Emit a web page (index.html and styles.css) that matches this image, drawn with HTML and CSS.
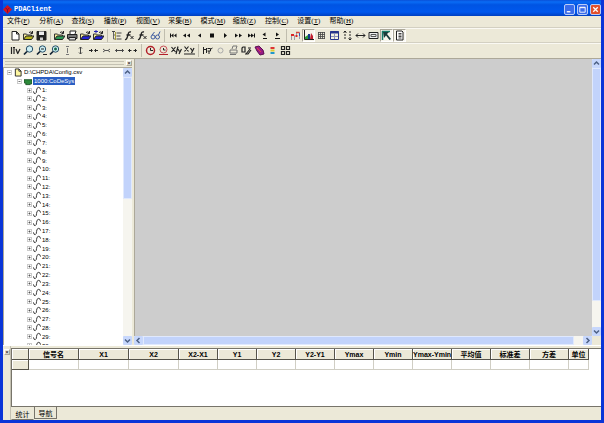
FILE: index.html
```
<!DOCTYPE html>
<html lang="zh-CN">
	<head>
		<meta charset="utf-8">
		<title>PDAClient</title>
		<link rel="stylesheet" href="styles.css">
	</head>
	<body>
		<div class="window">
			<header class="titlebar">
				<svg class="logo" viewBox="0 0 9 9"><path d="M4.500 0L9 4.500 4.500 9 0 4.500z" fill="#d8141c"/><path d="M2.500 3l2 1.500 2-1.500M4.500 4.500v3" stroke="#7a0a3c" fill="none"/></svg>
				<h1>PDAClient</h1>
				<button class="win-btn" aria-label="最小化"><svg viewBox="0 0 10 10"><path d="M2 7.500h4" stroke="#fff" stroke-width="1.500"/></svg></button>
				<button class="win-btn" aria-label="最大化"><svg viewBox="0 0 10 10"><path d="M2 2.500h6v5.500h-6zM2 3h6" stroke="#fff" fill="none"/></svg></button>
				<button class="win-btn close" aria-label="关闭"><svg viewBox="0 0 10 10"><path d="M2.500 2.500l5 5M7.500 2.500l-5 5" stroke="#fff" stroke-width="1.400"/></svg></button>
			</header>

			<nav class="menubar">
				<button>文件(<u>F</u>)</button>
				<button>分析(<u>A</u>)</button>
				<button>查找(<u>S</u>)</button>
				<button>播放(<u>P</u>)</button>
				<button>视图(<u>V</u>)</button>
				<button>采集(<u>B</u>)</button>
				<button>模式(<u>M</u>)</button>
				<button>缩放(<u>Z</u>)</button>
				<button>控制(<u>C</u>)</button>
				<button>设置(<u>T</u>)</button>
				<button>帮助(<u>H</u>)</button>
			</nav>

			<div class="toolbar" id="toolbar_main"></div>
			<div class="toolbar toolbar-view" id="toolbar_view"></div>

			<div class="workspace">
				<aside class="side">
					<div class="side-head">
						<span class="grip"></span>
						<button class="dock-close" aria-label="关闭">×</button>
					</div>
					<div class="side-body">
						<ul class="tree" id="tree"></ul>
						<div class="vscroll">
							<button class="arrow" aria-label="向上"><svg viewBox="0 0 9 9"><path d="M2 5.500L4.500 3 7 5.500"/></svg></button>
							<div class="track"><div class="thumb thumb-tree"></div></div>
							<button class="arrow" aria-label="向下"><svg viewBox="0 0 9 9"><path d="M2 3.500L4.500 6 7 3.500"/></svg></button>
						</div>
					</div>
				</aside>
				<main class="mdi">
					<div class="canvas"></div>
					<div class="vscroll">
						<button class="arrow" aria-label="向上"><svg viewBox="0 0 9 9"><path d="M2 5.500L4.500 3 7 5.500"/></svg></button>
						<div class="track"><div class="thumb thumb-mdi"></div></div>
						<button class="arrow" aria-label="向下"><svg viewBox="0 0 9 9"><path d="M2 3.500L4.500 6 7 3.500"/></svg></button>
					</div>
					<div class="hscroll">
						<button class="arrow" aria-label="向左"><svg viewBox="0 0 9 9"><path d="M5.500 2L3 4.500 5.500 7"/></svg></button>
						<div class="track"><div class="thumb thumb-wide"></div></div>
						<button class="arrow" aria-label="向右"><svg viewBox="0 0 9 9"><path d="M3.500 2L6 4.500 3.500 7"/></svg></button>
					</div>
				</main>
			</div>

			<section class="stats">
				<div class="stats-dock"><button class="dock-close" aria-label="关闭">×</button></div>
				<div class="stats-main">
					<div class="sheet">
						<table>
							<colgroup>
								<col class="c-head">
								<col class="c-wide" span="3">
								<col class="c-val" span="10">
								<col class="c-unit">
							</colgroup>
							<thead>
								<tr>
									<th></th>
									<th>信号名</th>
									<th>X1</th>
									<th>X2</th>
									<th>X2-X1</th>
									<th>Y1</th>
									<th>Y2</th>
									<th>Y2-Y1</th>
									<th>Ymax</th>
									<th>Ymin</th>
									<th>Ymax-Ymin</th>
									<th>平均值</th>
									<th>标准差</th>
									<th>方差</th>
									<th>单位</th>
								</tr>
							</thead>
							<tbody>
								<tr><th></th><td></td><td></td><td></td><td></td><td></td><td></td><td></td><td></td><td></td><td></td><td></td><td></td><td></td><td></td></tr>
							</tbody>
						</table>
					</div>
					<div class="tabs">
						<button class="tab active">统计</button>
						<button class="tab">导航</button>
					</div>
				</div>
			</section>
		</div>
		<script src="script.js"></script>
	</body>
</html>
```

FILE: styles.css
```
* {
	box-sizing: border-box;
}

body {
	margin: 0;
	font-family: "Liberation Sans", "Noto Sans CJK SC", sans-serif;
	font-size: 7px;
	line-height: 9px;
	color: #000;
}

button {
	margin: 0;
	padding: 0;
	border: 0;
	background: none;
	font: inherit;
	color: inherit;
}

svg {
	display: block;
}

.window {
	display: flex;
	flex-direction: column;
	height: 100vh;
	border: solid #0a35d8;
	border-width: 0 3px 3px;
	background: #ece9d8;
	overflow: hidden;
}

/* Title bar */
.titlebar {
	display: flex;
	align-items: center;
	gap: 2px;
	height: 16px;
	flex: none;
	margin: 0 -3px;
	padding: 2px 3px 0;
	background: linear-gradient(#0a50d8, #0a6cf5 12%, #0054e3 30%, #0058ee 75%, #0040c0);
}

.titlebar h1 {
	flex: 1;
	margin: 0;
	font-family: "Liberation Mono", monospace;
	font-size: 7px;
	color: #fff;
}

.logo {
	width: 9px;
	height: 9px;
}

.win-btn {
	width: 11px;
	height: 11px;
	border: 1px solid #b9cdf8;
	border-radius: 2px;
	background: #3a6cea;
}

.win-btn.close {
	background: #e2502c;
}

/* Menu */
.menubar {
	display: grid;
	grid-template-columns: repeat(11, 1fr);
	flex: none;
	width: 60%;
	height: 11px;
	padding-left: 4px;
}

.menubar button {
	text-align: left;
	white-space: nowrap;
	font-family: "Liberation Serif", "Noto Sans CJK SC", serif;
}

/* Toolbars */
.toolbar {
	display: flex;
	align-items: center;
	flex: none;
	height: 15px;
	padding-left: 6px;
	border-top: 1px solid #d3d0c2;
	box-shadow: inset 0 1px #faf9f3;
}

.toolbar-view {
	height: 16px;
}

.group {
	display: flex;
}

.group + .group {
	margin-left: 2px;
	padding-left: 2px;
	border-left: 1px solid #c0bdae;
}

.tool {
	display: flex;
	align-items: center;
	justify-content: center;
	width: 13px;
	height: 13px;
}

.tool svg {
	width: 11px;
	height: 11px;
	fill: none;
	stroke: #222;
}

.tool.pressed {
	border: 1px solid;
	border-color: #aca899 #fff #fff #aca899;
	background: #f7f5ec;
}

/* Workspace */
.workspace {
	display: flex;
	flex: 1;
	min-height: 0;
	border-top: 1px solid #aca899;
}

.side {
	display: flex;
	flex-direction: column;
	flex: none;
	width: 129px;
}

.side-head {
	display: flex;
	align-items: center;
	gap: 2px;
	flex: none;
	height: 8px;
	padding-left: 2px;
}

.grip {
	flex: 1;
	height: 4px;
	border: solid #c4c1b2;
	border-width: 1px 0;
}

.dock-close {
	width: 6px;
	height: 6px;
	border: 1px solid;
	border-color: #fff #aca899 #aca899 #fff;
	font-size: 6px;
	line-height: 4px;
}

.side-body {
	display: flex;
	flex: 1;
	min-height: 0;
	overflow: hidden;
	border-top: 1px solid #aca899;
	border-left: 1px solid #aca899;
	background: #fff;
}

/* The last row is cut by the pane's lower edge */
.tree {
	display: grid;
	grid-auto-rows: 1fr;
	flex: 1;
	margin: 0 0 -5px;
	padding: 0 0 0 3px;
	list-style: none;
	font-size: 6px;
	line-height: 8px;
}

.tree li {
	display: flex;
	align-items: center;
	gap: 2px;
	min-height: 0;
}

.tree .level-1 {
	padding-left: 10px;
}

.tree .level-2 {
	gap: 1px;
	padding-left: 20px;
}

.tree svg {
	width: 8px;
	height: 9px;
	fill: none;
	stroke: #222;
}

.tree .box {
	width: 5px;
	height: 5px;
	stroke: #444;
}

.selected {
	padding: 0 1px;
	margin-left: -1px;
	background: #2a5fc4;
	color: #fff;
}

.mdi {
	display: grid;
	grid-template: 1fr 9px / 1fr 9px;
	flex: 1;
	min-width: 0;
	margin-left: 2px;
}

.canvas {
	background: #cdcdcd;
	border-left: 1px solid #aca899;
}

/* Scroll bars */
.vscroll,
.hscroll {
	display: flex;
	background: #f6f5ef;
}

.vscroll {
	flex-direction: column;
	width: 9px;
}

.track {
	flex: 1;
	min-width: 0;
	min-height: 0;
}

.thumb {
	height: 100%;
	border: 1px solid #e0e9fd;
	border-radius: 1px;
	background: #c2d3fb;
}

.thumb-tree {
	height: 47%;
}

.thumb-mdi {
	height: 90%;
}

.thumb-wide {
	width: 98%;
}

.arrow {
	flex: none;
	width: 9px;
	height: 9px;
	background: #c7d7fc;
	border-radius: 1px;
}

.arrow svg {
	fill: none;
	stroke: #4d6185;
	stroke-width: 1.5;
}

/* Statistics pane */
.stats {
	display: flex;
	flex: none;
	height: 75px;
	border-top: 1px solid #fff;
}

.stats-dock {
	flex: none;
	width: 8px;
	padding: 1px;
	border-right: 1px solid #c4c1b2;
}

.stats-main {
	display: flex;
	flex-direction: column;
	flex: 1;
	min-width: 0;
	padding-top: 2px;
}

.sheet {
	flex: 1;
	border: solid #77746a;
	border-width: 1px 0 1px 1px;
	background: #fff;
	overflow: hidden;
}

table {
	width: 577px;
	table-layout: fixed;
	border-collapse: separate;
	border-spacing: 0;
}

.c-head {
	width: 17px;
}

.c-wide {
	width: 50px;
}

.c-val {
	width: 39px;
}

.c-unit {
	width: 20px;
}

th,
td {
	height: 10px;
	padding: 0;
	border: solid #d0cec4;
	border-width: 0 1px 1px 0;
	line-height: 9px;
	white-space: nowrap;
}

th {
	border-color: #55534a;
	background: #ece9d8;
	box-shadow: inset 1px 1px #fff;
}

thead th {
	height: 11px;
	font-size: 7px;
}

.tabs {
	display: flex;
	flex: none;
	height: 13px;
}

.tab {
	width: 23px;
	height: 12px;
	padding-top: 1px;
	border: solid #77746a;
	border-width: 0 1px 1px 1px;
}

.tab.active {
	height: 13px;
	padding-top: 2px;
	border-color: transparent transparent #77746a;
}
```

FILE: script.js
```
//Tool buttons: [label, drawing, pressed], drawn on an 11 x 11 grid
var folder = function(c, extra){
	return '<path d="M.5 9V4h3l1 1h4v1" fill="#f5ec9a" stroke="#333"/><path d="M.5 9.500L3 6h8L8.500 9.500z" fill="' + c + '" stroke="#222"/><path d="M6 2.500q2-1.500 3.500.500M9.500 1v2.500h-2"/>' + (extra || '');
};
var fx = '<path d="M1 9.500q1.500.5 2.500-3l1-3.500q.5-1.500 2.500-1M2.500 5h4" stroke-width="1.300"/><path d="M6.500 6l3 3M9.500 6l-3 3"/>';
var lens = function(extra){
	return '<circle cx="6.500" cy="4" r="3.200" fill="#cdeef2" stroke="#274d66"/><path d="M4 6.500L1 9.500" stroke="#123" stroke-width="1.700"/>' + extra;
};
var solid = function(d){
	return '<path d="' + d + '" fill="#111" stroke="none"/>';
};

var mainTools = [
	[
		['新建', '<path d="M2 1.500h4.500L9 4v6H2zM6.500 1.500V4H9" fill="#fff"/>'],
		['打开', folder('#b8b51c')],
		['保存', '<path d="M1 1.500h9v8.500H1z" fill="#222"/><path d="M3 1.500h5v3.500H3z" fill="#eee" stroke="none"/><path d="M4 7.500h3V10H4z" fill="#ccc" stroke="none"/>']
	],
	[
		['打开配置', folder('#2b9a54')],
		['打印', '<path d="M3 4V1h6L8 4" fill="#fff"/><path d="M.5 4.500h9.500v4H.5z" fill="#777"/><path d="M2 7.500h6.500V10H2z" fill="#ddd"/>'],
		['打开数据', folder('#2222d4')],
		['追加数据', folder('#2222d4', '<path d="M1 1.500h4M3 0v3" stroke="#2222b0"/>')]
	],
	[
		['信号树', '<path d="M2.500 2v7M2.500 5h2M2.500 9h2" stroke="#666"/><path d="M1 1.500h3M5.500 3h5M5.500 6h4M5.500 9h5" stroke="#444"/><path d="M4.500 2v8" stroke="#a9a13a"/>'],
		['函数', fx],
		['函数编辑', fx],
		['查看', '<circle cx="3" cy="7" r="2" stroke="#3c5aa0"/><circle cx="7.500" cy="7" r="2" stroke="#3c5aa0"/><path d="M2 5l2.500-3M8.500 5L10 1.500" stroke="#3c5aa0"/>']
	],
	[
		['首个', solid('M2 3.500h1v4H2zM5.500 3.500v4L3 5.500zM8.500 3.500v4L6 5.500z')],
		['快退', solid('M5 3.500v4L2 5.500zM9 3.500v4L6 5.500z')],
		['后退', solid('M7 3.500v4L4 5.500z')],
		['停止', solid('M3 3.500h4v4H3z')],
		['播放', solid('M4 3v5l3-2.500z')],
		['快进', solid('M2 3.500v4l3-2zM6 3.500v4l3-2z')],
		['末个', solid('M2 3.500v4l3-2zM5 3.500v4l3-2zM8 3.500h1v4H8z')],
		['前一页', solid('M6.500 2.500v4l-3-2zM4 8h4v1H4z')],
		['后一页', solid('M4 2.500v4l3-2zM3 8h5v1H3z')]
	],
	[
		['曲线', '<path d="M1.500 10V5.500h3V10M6.500 6V2.500h3V9" stroke="#99a"/><path d="M1 5h3M5.500 6h2" stroke="#d22" stroke-width="2"/><path d="M6 2.500h3.500" stroke="#d4443a" stroke-width="1.500"/><path d="M9.500 3v3" stroke="#35b"/>'],
		['图表', '<path d="M1.500 0v9.500H11"/><path d="M2 9V7l3-2v4z" fill="#2a9a3a" stroke="none"/><path d="M5 9V4h2v5z" fill="#123a8a" stroke="none"/><path d="M7 9l1-6 2 3v3z" fill="#c22030" stroke="none"/>', true],
		['网格', '<path d="M2 2.500h7M2 4.500h7M2 6.500h7M2 8.500h7M2.500 2v7M4.500 2v7M6.500 2v7M8.500 2v7" stroke="#444" stroke-width=".8"/>'],
		['窗口', '<path d="M1.500 1.500h8v8h-8z" fill="#f3f1e0" stroke="#26348c"/><path d="M1 2.500h9" stroke="#26348c" stroke-width="2"/><path d="M5.500 3v6M2 6.500h7" stroke="#8a90b8"/>'],
		['纵向', '<path d="M3 1v9M8 1v9" stroke-dasharray="2 1"/><path d="M1.500 2.500L3 1l1.500 1.500M6.500 8.500L8 10l1.500-1.500"/>'],
		['横向', '<path d="M1 5.500h9M3 3.500l-2 2 2 2M8 3.500l2 2-2 2"/>'],
		['标签', '<path d="M1 2.500h9v6H1z" fill="#eee"/><path d="M3 4.500h5v2H3z" stroke="#555"/>'],
		['光标', '<path d="M1.500 1v9M1 1.500h8" stroke="#137a68" stroke-width="1.500"/><path d="M2 2h6L6 4l4 5-1.500 1L5 5.500 3 8z" fill="#173c3c" stroke="none"/>', true],
		['文档', '<path d="M2.500 1h5.500l1 1v8H2.500z" fill="#fff"/><path d="M4.500 3.500h3M4.500 5h3M4.500 6.500h3M4.500 8h3" stroke="#444"/>', true]
	]
];

var viewTools = [
	[
		['Y轴', '<path d="M1.500 2v7M4 2v7M6 4l1.500 4M10 4L7.500 9M3 2.500h2" stroke-width="1.200"/>'],
		['缩放', lens('')],
		['放大', lens('<path d="M7 9.500h4" stroke="#222"/><path d="M5 4h3"/>')],
		['缩小', lens('<path d="M5 4h3M6.500 2.500v3" stroke="#1a6a4a" stroke-width="1.500"/>')],
		['纵向压缩', '<path d="M5.500 3v5M4 1.500h3M4 9.500h3" stroke="#777"/>'],
		['纵向展开', '<path d="M5.500 2v7M4 3.500L5.500 2 7 3.500M4 7.500L5.500 9 7 7.500" stroke="#444"/>'],
		['横向压缩', '<path d="M1 5.500h3M7 5.500h3M3 4l1.500 1.500L3 7M8 4L6.500 5.500 8 7"/>'],
		['横向收拢', '<path d="M2 4l2 1.500L2 7M9 4L7 5.500 9 7M4 5.500h3" stroke="#555"/>'],
		['横向展开', '<path d="M1.500 5.500h8M3 4L1.500 5.500 3 7M8 4l1.500 1.500L8 7" stroke="#444"/>'],
		['横向适应', '<path d="M1.500 5.500h3M6.500 5.500h3M3 4L1.500 5.500 3 7M8 4l1.500 1.500L8 7"/>']
	],
	[
		['时钟', '<circle cx="5.500" cy="5.500" r="4" stroke="#b3202a" stroke-width="1.500"/><path d="M5.500 3v2.500h2.500"/>'],
		['时间段', '<circle cx="5.500" cy="4.500" r="3.500" stroke="#c8505a"/><path d="M5.500 3v2h2"/><path d="M1 9.500h9" stroke="#b3202a"/>'],
		['X/Y', '<path d="M.5 2l4 5M4.500 2l-4 5M7 1.500L5 9M7 4l1.500 2.500M10.500 4L8 9" stroke-width="1.200"/>'],
		['X/Y 对比', '<path d="M.5 1.500l4 5M4.500 1.500l-4 5M6.500 3l1.500 2.500M10 3L7.500 8M0 9h11" stroke-width="1.200"/>']
	],
	[
		['播放标记', '<path d="M1.500 2v7M1 4.500h3M4.500 3v5M5.500 3.500h3v2.500h-3M7 6v3M9 4l1.500-1"/>'],
		['圆', '<circle cx="5.500" cy="5.500" r="2.500" stroke="#aaa"/>'],
		['打印预览', '<path d="M4 4l1-3h4L8 4M2 5h7v3H2zM2 9.500h6" stroke="#777"/>'],
		['编辑', '<path d="M1 3v4h3V2H2zM5 9l4-5M7 3h3M4 9h3l3-4" stroke-width="1.200"/>'],
		['颜色', '<path d="M1 2l4-1 4 4 1 4-4 1-3-4z" fill="#9a1c86" stroke="#5a1050"/><path d="M3 3l4 4" stroke="#e0404a"/>'],
		['色条', '<path d="M3.500 3h4" stroke="#d33" stroke-width="2"/><path d="M3.500 5.500h4" stroke="#dc3" stroke-width="2"/><path d="M3.500 8h4" stroke="#29c" stroke-width="2"/>'],
		['布局', '<path d="M1.500 1.500h3v3h-3zM6.500 1.500h3v3h-3zM1.500 6.500h3v3h-3zM6.500 6.500h3v3h-3z" stroke-width="1.200"/>']
	]
];

function drawToolbar(id, groups){
	document.getElementById(id).innerHTML = groups.map(function(group){
		return '<div class="group">' + group.map(function(t){
			return '<button class="tool' + (t[2] ? ' pressed' : '') + '" aria-label="' + t[0] + '"><svg viewBox="0 0 11 11">' + t[1] + '</svg></button>';
		}).join('') + '</div>';
	}).join('');
}

drawToolbar('toolbar_main', mainTools);
drawToolbar('toolbar_view', viewTools);

//Signal tree
var minus = '<svg class="box" viewBox="0 0 7 7"><path d="M.5.5h6v6h-6z" stroke="#aaa"/><path d="M2 3.500h3"/></svg>';
var plus = '<svg class="box" viewBox="0 0 7 7"><path d="M.5.5h6v6h-6z" stroke="#aaa"/><path d="M2 3.500h3M3.500 2v3"/></svg>';
var wave = '<svg viewBox="0 0 9 9"><path d="M.5 5.500q.5 3 2 2.500T4 4.500 6 1t2.500 2.500"/></svg>';

var rows = '<li>' + minus + '<svg viewBox="0 0 9 9"><path d="M1.500.5h4L8 3v5.500H1.500zM5.500.5V3H8" fill="#fdf6a0"/></svg><span>D:\\CHPDA\\Config.csv</span></li>';
rows += '<li class="level-1">' + minus + '<svg viewBox="0 0 9 9"><path d="M0 2.500h9V7H7v1H2V6H0z" fill="#2c8a3a" stroke="#174d20"/></svg><span class="selected">1000:CoDeSys</span></li>';
for(var i = 1; i <= 30; i++){
	rows += '<li class="level-2">' + plus + wave + '<span>' + i + ':</span></li>';
}
document.getElementById('tree').innerHTML = rows;
```
